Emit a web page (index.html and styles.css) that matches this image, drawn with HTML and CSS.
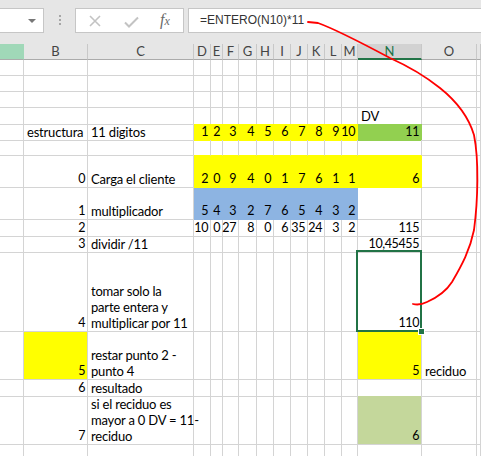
FILE: index.html
```html
<!DOCTYPE html>
<html>
<head>
<meta charset="utf-8">
<link rel="stylesheet" href="styles.css">
</head>
<body>
<div class="app">
  <div class="toolbar">
    <div class="namebox"><span class="caret"></span></div>
    <div class="dots"><i></i><i></i><i></i></div>
    <div class="btnbox">
      <svg class="ico-x" width="12" height="12" viewBox="0 0 12 12"><path d="M1 1L11 11M11 1L1 11" stroke="#c3c3c3" stroke-width="1.6" fill="none"/></svg>
      <svg class="ico-ok" width="15" height="12" viewBox="0 0 15 12"><path d="M1 6.5L5 10.5L14 1.5" stroke="#c3c3c3" stroke-width="2" fill="none"/></svg>
      <span class="fx">f<small>x</small></span>
    </div>
    <div class="formula">=ENTERO(N10)*11</div>
  </div>

  <div class="row hdr">
    <div class="h hA"></div><div class="h">B</div><div class="h">C</div><div class="h">D</div><div class="h">E</div><div class="h">F</div><div class="h">G</div><div class="h">H</div><div class="h">I</div><div class="h">J</div><div class="h">K</div><div class="h">L</div><div class="h">M</div><div class="h hN">N</div><div class="h">O</div><div class="h"></div>
  </div>

  <div class="sheet">
    <div class="row r16"><div></div><div></div><div></div><div></div><div></div><div></div><div></div><div></div><div></div><div></div><div></div><div></div><div></div><div></div><div></div><div></div></div>
    <div class="row r16"><div></div><div></div><div></div><div></div><div></div><div></div><div></div><div></div><div></div><div></div><div></div><div></div><div></div><div></div><div></div><div></div></div>
    <div class="row r16"><div></div><div></div><div></div><div></div><div></div><div></div><div></div><div></div><div></div><div></div><div></div><div></div><div></div><div></div><div></div><div></div></div>
    <div class="row r16"><div></div><div></div><div></div><div></div><div></div><div></div><div></div><div></div><div></div><div></div><div></div><div></div><div></div><div class="l">DV</div><div></div><div></div></div>
    <div class="row r16"><div></div><div class="l">estructura</div><div class="l">11 digitos</div><div class="y n">1</div><div class="y n">2</div><div class="y n">3</div><div class="y n">4</div><div class="y n">5</div><div class="y n">6</div><div class="y n">7</div><div class="y n">8</div><div class="y n">9</div><div class="y n">10</div><div class="g n">11</div><div></div><div></div></div>
    <div class="row r16"><div></div><div></div><div></div><div class="yb"></div><div class="yb"></div><div class="yb"></div><div class="yb"></div><div class="yb"></div><div class="yb"></div><div class="yb"></div><div class="yb"></div><div class="yb"></div><div class="yb"></div><div class="yb"></div><div></div><div></div></div>
    <div class="row r32"><div></div><div class="n">0</div><div class="l">Carga el cliente</div><div class="y n">2</div><div class="y n">0</div><div class="y n">9</div><div class="y n">4</div><div class="y n">0</div><div class="y n">1</div><div class="y n">7</div><div class="y n">6</div><div class="y n">1</div><div class="y n">1</div><div class="y n">6</div><div></div><div></div></div>
    <div class="row r32"><div></div><div class="n">1</div><div class="l">multiplicador</div><div class="b n">5</div><div class="b n">4</div><div class="b n">3</div><div class="b n">2</div><div class="b n">7</div><div class="b n">6</div><div class="b n">5</div><div class="b n">4</div><div class="b n">3</div><div class="b n">2</div><div></div><div></div><div></div></div>
    <div class="row r16"><div></div><div class="n">2</div><div></div><div class="n">10</div><div class="n">0</div><div class="n">27</div><div class="n">8</div><div class="n">0</div><div class="n">6</div><div class="n">35</div><div class="n">24</div><div class="n">3</div><div class="n">2</div><div class="n">115</div><div></div><div></div></div>
    <div class="row r16"><div></div><div class="n">3</div><div class="l">dividir /11</div><div></div><div></div><div></div><div></div><div></div><div></div><div></div><div></div><div></div><div></div><div class="n">10,45455</div><div></div><div></div></div>
    <div class="row r80"><div></div><div class="n">4</div><div class="l">tomar solo la<br>parte entera y<br>multiplicar por 11</div><div></div><div></div><div></div><div></div><div></div><div></div><div></div><div></div><div></div><div></div><div class="n sel">110</div><div></div><div></div></div>
    <div class="row r48"><div></div><div class="yw n">5</div><div class="l">restar punto 2 -<br>punto 4</div><div></div><div></div><div></div><div></div><div></div><div></div><div></div><div></div><div></div><div></div><div class="yw n">5</div><div class="l">reciduo</div><div></div></div>
    <div class="row r16"><div></div><div class="n">6</div><div class="l">resultado</div><div></div><div></div><div></div><div></div><div></div><div></div><div></div><div></div><div></div><div></div><div></div><div></div><div></div></div>
    <div class="row r48"><div></div><div class="n">7</div><div class="l">si el reciduo es<br>mayor a 0 DV = 11-<br>reciduo</div><div></div><div></div><div></div><div></div><div></div><div></div><div></div><div></div><div></div><div></div><div class="o n">6</div><div></div><div></div></div>
    <div class="row r16"><div></div><div></div><div></div><div></div><div></div><div></div><div></div><div></div><div></div><div></div><div></div><div></div><div></div><div></div><div></div><div></div></div>
  </div>

  <svg class="ink" width="481" height="456" viewBox="0 0 481 456">
    <path d="M308 22 L318 23 C332 28 360 42 390 58 C410 67 425 76 440 88 C455 100 468 115 474 135 C479 160 478 200 474 230 C470 250 462 265 452 282 C445 293 436 298 427 302 C421 305 417 305 413 304" stroke="#ff0000" stroke-width="1.8" fill="none" stroke-linecap="round" stroke-linejoin="round"/>
  </svg>
</div>
</body>
</html>
```
FILE: styles.css
```css
html, body {
  margin: 0;
  padding: 0;
  background: #ffffff;
}
.app {
  position: relative;
  width: 481px;
  height: 456px;
  overflow: hidden;
  font-family: Lato, "Liberation Sans", sans-serif;
  font-size: 13px;
  color: #000;
}
.toolbar {
  height: 44px;
  background: #e6e6e6;
  display: flex;
  align-items: flex-start;
  padding-top: 8px;
  box-sizing: border-box;
}
.namebox {
  width: 44px;
  height: 25px;
  box-sizing: border-box;
  background: #fff;
  border: 1px solid #c6c6c6;
  border-left: none;
  display: flex;
  align-items: center;
  justify-content: flex-end;
  padding-right: 7px;
}
.caret {
  width: 0;
  height: 0;
  border-left: 4px solid transparent;
  border-right: 4px solid transparent;
  border-top: 4px solid #777;
}
.dots {
  width: 31px;
  display: flex;
  flex-direction: column;
  align-items: center;
  gap: 2px;
  padding-top: 7px;
}
.dots i {
  display: block;
  width: 2px;
  height: 2px;
  background: #a6a6a6;
}
.btnbox {
  width: 109px;
  height: 25px;
  box-sizing: border-box;
  background: #fff;
  border: 1px solid #c6c6c6;
  position: relative;
}
.ico-x { position: absolute; left: 13px; top: 6px; }
.ico-ok { position: absolute; left: 48px; top: 7px; }
.fx {
  position: absolute;
  left: 84px;
  top: 2px;
  font-family: "Liberation Serif", serif;
  font-style: italic;
  font-size: 16px;
  color: #6a6a6a;
}
.fx small { font-size: 12px; }
.formula {
  margin-left: 4px;
  flex: 1;
  height: 25px;
  box-sizing: border-box;
  background: #fff;
  border: 1px solid #c6c6c6;
  border-right: none;
  padding-left: 11px;
  line-height: 23px;
  font-family: "Liberation Sans", sans-serif;
  font-size: 12px;
  color: #333;
}
.row {
  display: grid;
  grid-template-columns: 24px 64px 106px 17px 12px 16px 18px 17px 17px 17px 17px 17px 16px 64px 55px 1fr;
}
.hdr {
  height: 16px;
  background: #e6e6e6;
}
.h {
  box-sizing: border-box;
  border-right: 1px solid #c8c8c8;
  border-bottom: 1px solid #ababab;
  text-align: center;
  line-height: 15px;
  color: #444;
}
.hA { background: #a0d8b8; border-right-color: #a0d8b8; }
.hN {
  background: #d2d2d2;
  color: #217346;
  border-bottom: 2px solid #217346;
  line-height: 14px;
}
.r16 { height: 16px; }
.r32 { height: 32px; }
.r48 { height: 48px; }
.r80 { height: 80px; }
.sheet .row > div {
  box-sizing: border-box;
  border-right: 1px solid #d4d4d4;
  border-bottom: 1px solid #d4d4d4;
  display: flex;
  align-items: flex-end;
  line-height: 16px;
  white-space: nowrap;
  min-width: 0;
  letter-spacing: -0.2px;
}
.sheet .row > .n {
  justify-content: flex-end;
  padding-right: 2px;
  font-size: 12.5px;
  letter-spacing: -0.4px;
}
.sheet .row > .l {
  padding-left: 3px;
  overflow: visible;
}
.sheet .row > .y { background: #ffff00; border-color: #ffff00; }
.sheet .row > .yb { border-bottom-color: #ffff00; }
.sheet .row > .yw { background: #ffff00; }
.sheet .row > .g { background: #92d050; border-color: #92d050; }
.sheet .row > .b { background: #8db4e2; border-color: #8db4e2; }
.sheet .row > .o { background: #c4d79b; }
.sheet .row > .sel { position: relative; }
.sel::after {
  content: "";
  position: absolute;
  left: -2px;
  top: -2px;
  right: -1px;
  bottom: -1px;
  border: 2px solid #217346;
}
.sel::before {
  content: "";
  position: absolute;
  right: -4px;
  bottom: -4px;
  width: 5px;
  height: 5px;
  background: #217346;
  border: 1px solid #fff;
  z-index: 2;
}
.ink {
  position: absolute;
  left: 0;
  top: 0;
  pointer-events: none;
}
```
